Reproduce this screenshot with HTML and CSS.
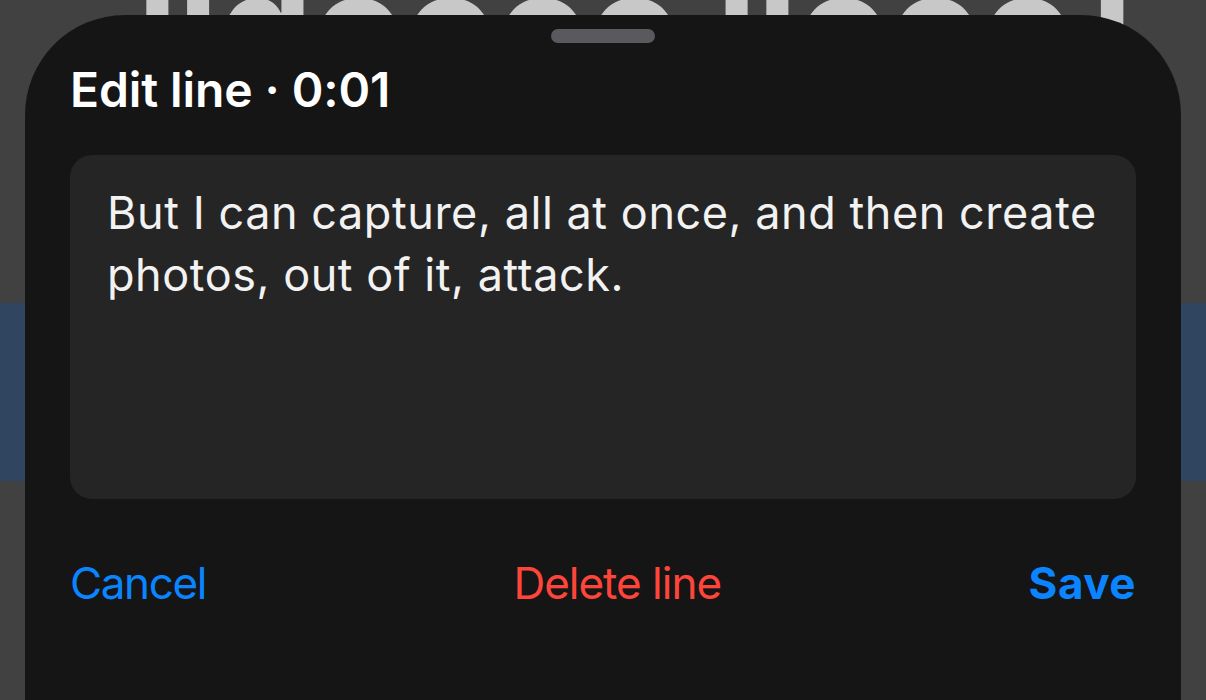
FILE: index.html
```html
<!DOCTYPE html>
<html lang="en">
<head>
  <meta charset="UTF-8">
  <meta name="viewport" content="width=device-width, initial-scale=1.0">
  <title>Edit line</title>
  <link rel="stylesheet" href="styles.css">
</head>
<body>
  <div class="backdrop" aria-hidden="true">
    <div class="backdrop-head">
      <div class="backdrop-title">lldoooo lloooT</div>
    </div>
    <div class="backdrop-band"></div>
  </div>

  <div class="sheet">
    <div class="grabber"></div>
    <h1 class="sheet-title">Edit line · 0:01</h1>
    <div class="line-box">But I can capture, all at once, and then create photos, out of it, attack.</div>
    <div class="actions">
      <button class="action cancel">Cancel</button>
      <button class="action delete">Delete line</button>
      <button class="action save">Save</button>
    </div>
  </div>
</body>
</html>
```

FILE: styles.css
```css
html, body {
  margin: 0;
  height: 100%;
  overflow: hidden;
}
body {
  font-family: Inter, 'Noto Sans', sans-serif;
  background: #414141;
  position: relative;
}
.backdrop {
  height: 700px;
  overflow: hidden;
}
.backdrop-head {
  height: 303px;
  overflow: hidden;
}
.backdrop-title {
  margin-top: -48px;
  padding-left: 137px;
  font-size: 150px;
  line-height: 150px;
  font-weight: 700;
  color: #c8c8c8;
  white-space: nowrap;
}
.backdrop-band {
  height: 178px;
  background: #2f4560;
}
.sheet {
  position: absolute;
  left: 25px;
  right: 25px;
  top: 15px;
  bottom: 0;
  background: #151515;
  border-radius: 100px 100px 0 0;
  padding: 14px 45px 0 45px;
  display: flex;
  flex-direction: column;
  color: #fff;
}
.grabber {
  align-self: center;
  width: 104px;
  height: 14px;
  border-radius: 7px;
  background: #5a5a5e;
}
.sheet-title {
  margin: 18px 0 0 0;
  font-size: 48px;
  line-height: 58px;
  font-weight: 600;
  letter-spacing: -0.1px;
}
.line-box {
  margin-top: 36px;
  height: 344px;
  box-sizing: border-box;
  background: #252525;
  border-radius: 22px;
  padding: 27px 20px 0 37px;
  font-size: 45px;
  line-height: 62px;
  letter-spacing: 0.55px;
  color: #f2f2f2;
}
.actions {
  margin-top: 57px;
  display: flex;
  justify-content: space-between;
}
.action {
  background: none;
  border: none;
  padding: 0;
  font-family: inherit;
  font-size: 44px;
  line-height: 54px;
  cursor: pointer;
}
.cancel {
  color: #0a84ff;
  letter-spacing: -1.4px;
}
.delete {
  color: #ff453a;
  letter-spacing: -1px;
}
.save {
  color: #0a84ff;
  font-weight: 700;
  letter-spacing: 0.5px;
}
```
